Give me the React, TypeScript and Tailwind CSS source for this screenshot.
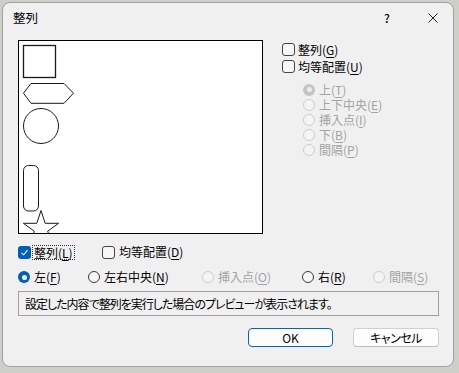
import React from "react";

const font = {
  fontFamily: '"Noto Sans CJK JP", "Noto Sans", sans-serif',
};

function Acc({ label, k }: { label: string; k: string }) {
  return (
    <span>
      {label}(<span className="underline underline-offset-[2px]">{k}</span>)
    </span>
  );
}

function Check({ checked }: { checked?: boolean }) {
  if (checked)
    return (
      <span className="w-[13px] h-[13px] rounded-[3px] bg-[#005fb8] flex items-center justify-center shrink-0">
        <svg width="9" height="9" viewBox="0 0 9 9">
          <path d="M1.5 4.8 L3.6 6.8 L7.6 2.2" stroke="white" strokeWidth="1.1" fill="none" />
        </svg>
      </span>
    );
  return <span className="w-[13px] h-[13px] rounded-[3px] border border-[#444] bg-[#f7f7f7] shrink-0" />;
}

function Radio({ checked, disabled }: { checked?: boolean; disabled?: boolean }) {
  if (checked && !disabled)
    return (
      <span className="w-[12px] h-[12px] rounded-full bg-[#005fb8] flex items-center justify-center shrink-0">
        <span className="w-[5px] h-[5px] rounded-full bg-white" />
      </span>
    );
  if (checked && disabled)
    return (
      <span className="w-[12px] h-[12px] rounded-full bg-[#c4c4c4] flex items-center justify-center shrink-0">
        <span className="w-[5px] h-[5px] rounded-full bg-[#ececec]" />
      </span>
    );
  if (disabled)
    return <span className="w-[12px] h-[12px] rounded-full border border-[#cdcdcd] bg-[#f4f4f4] shrink-0" />;
  return <span className="w-[12px] h-[12px] rounded-full border border-[#3a3a3a] bg-[#f7f7f7] shrink-0" />;
}

export default function App() {
  return (
    <div
      className="w-[459px] h-[373px] bg-[#cfcfc9] pt-[2px] pl-[2px] overflow-hidden text-[12px] leading-[16px] text-black [font-feature-settings:'palt']"
      style={font}
    >
      <div className="w-[452px] h-[365px] bg-[#f0f0f0] rounded-[8px] border border-[#a2a2a2] flex flex-col">
        {/* title bar */}
        <div className="h-[30px] flex items-center pl-[10px] pr-[15px] shrink-0">
          <span className="text-[12.5px]">整列</span>
          <span className="flex-1" />
          <span className="w-[10px] text-center text-[12px] font-medium">?</span>
          <span className="w-[36px]" />
          <svg width="10" height="10" viewBox="0 0 10 10">
            <path d="M0.5 0.5 L9.5 9.5 M9.5 0.5 L0.5 9.5" stroke="#222" strokeWidth="1" />
          </svg>
        </div>
        <div className="pl-[15px] pt-[7px] flex flex-col">
          {/* top row */}
          <div className="flex">
            <div className="w-[245px] h-[194px] border border-black bg-white overflow-hidden">
              <svg width="243" height="192" viewBox="0 0 243 192">
                <g fill="none" stroke="#1a1a1a" strokeWidth="1">
                  <rect x="4.5" y="4.5" width="32" height="32" strokeWidth="1.3" />
                  <polygon points="4.5,52.2 12,42.5 45,42.5 54.5,52.2 45,62.3 12,62.3" />
                  <circle cx="22" cy="85" r="17.5" />
                  <rect x="4.5" y="124.5" width="15" height="45.5" rx="5" />
                  <polygon points="22,169.5 26.2,182.3 39.6,182.3 28.7,190.2 32.9,203 22,195.1 11.1,203 15.3,190.2 4.4,182.3 17.8,182.3" />
                </g>
              </svg>
            </div>
            <div className="ml-[19px] pt-[1px] flex flex-col">
              <div className="h-[17px] flex items-center gap-[3px]">
                <Check />
                <Acc label="整列" k="G" />
              </div>
              <div className="h-[17px] flex items-center gap-[3px]">
                <Check />
                <Acc label="均等配置" k="U" />
              </div>
              <div className="mt-[7px] pl-[21px] flex flex-col text-[#a3a3a3] leading-[15px]">
                <div className="h-[15px] flex items-center gap-[4px]">
                  <Radio checked disabled />
                  <Acc label="上" k="T" />
                </div>
                <div className="h-[15px] flex items-center gap-[4px]">
                  <Radio disabled />
                  <Acc label="上下中央" k="E" />
                </div>
                <div className="h-[15px] flex items-center gap-[4px]">
                  <Radio disabled />
                  <Acc label="挿入点" k="I" />
                </div>
                <div className="h-[15px] flex items-center gap-[4px]">
                  <Radio disabled />
                  <Acc label="下" k="B" />
                </div>
                <div className="h-[15px] flex items-center gap-[4px]">
                  <Radio disabled />
                  <Acc label="間隔" k="P" />
                </div>
              </div>
            </div>
          </div>
          {/* checkbox row */}
          <div className="mt-[10px] h-[16px] flex items-center">
            <div className="w-[84px] flex items-center gap-[1px]">
              <Check checked />
              <span className="border border-dotted border-[#333] px-[1px] leading-[13px]">
                <Acc label="整列" k="L" />
              </span>
            </div>
            <div className="flex items-center gap-[4px]">
              <Check />
              <Acc label="均等配置" k="D" />
            </div>
          </div>
          {/* radio row */}
          <div className="mt-[9px] h-[16px] flex items-center">
            <div className="w-[70px] flex items-center gap-[4px]">
              <Radio checked />
              <Acc label="左" k="F" />
            </div>
            <div className="w-[114px] flex items-center gap-[4px]">
              <Radio />
              <Acc label="左右中央" k="N" />
            </div>
            <div className="w-[100px] flex items-center gap-[4px] text-[#a3a3a3]">
              <Radio disabled />
              <Acc label="挿入点" k="O" />
            </div>
            <div className="w-[71px] flex items-center gap-[4px]">
              <Radio />
              <Acc label="右" k="R" />
            </div>
            <div className="flex items-center gap-[4px] text-[#a3a3a3]">
              <Radio disabled />
              <Acc label="間隔" k="S" />
            </div>
          </div>
          {/* status */}
          <div className="mt-[6px] w-[421px] h-[25px] border border-[#a0a0a0] bg-[#f0f0f0] flex items-center pl-[6px] tracking-[-1px]">
            設定した内容で整列を実行した場合のプレビューが表示されます。
          </div>
          {/* buttons */}
          <div className="mt-[12px] flex pl-[230px] gap-[20px]">
            <div className="w-[85px] h-[19px] rounded-[4px] border border-[#0067c0] bg-[#fdfdfd] flex items-center justify-center">
              OK
            </div>
            <div className="w-[86px] h-[19px] rounded-[4px] border border-[#d0d0d0] border-b-[#b8b8b8] bg-[#fdfdfd] flex items-center justify-center tracking-[-0.5px]">
              キャンセル
            </div>
          </div>
        </div>
      </div>
    </div>
  );
}
